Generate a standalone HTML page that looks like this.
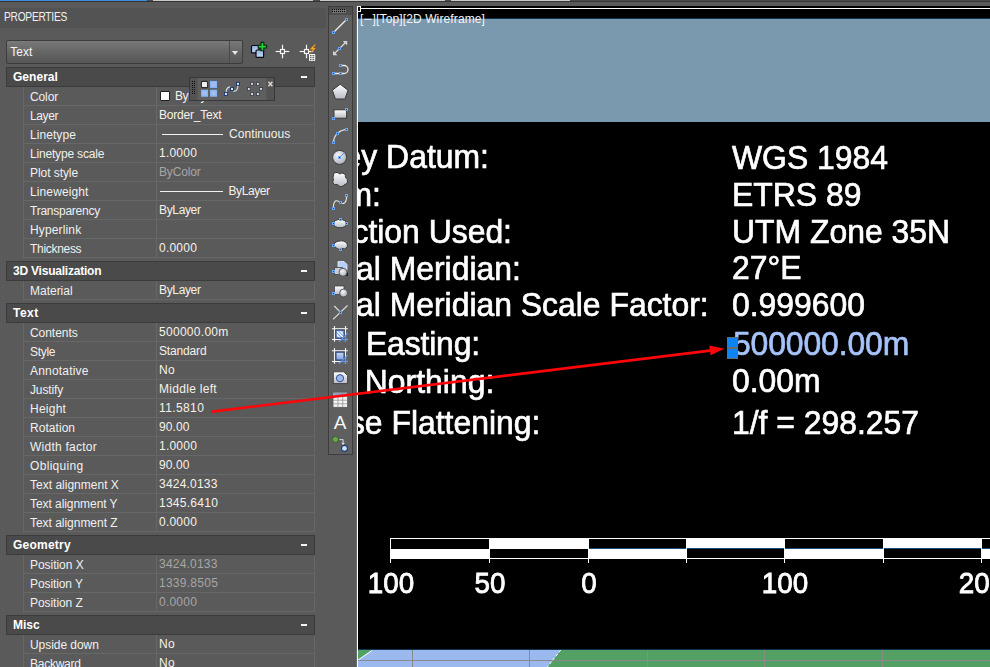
<!DOCTYPE html><html><head><meta charset="utf-8"><title>Properties</title><style>
*{box-sizing:border-box;margin:0;padding:0}
html,body{width:990px;height:667px;overflow:hidden;background:#555555}
body{position:relative;font-family:"Liberation Sans",sans-serif;font-size:12px;color:#f2f2f2}
.a{position:absolute}
.panel{position:absolute;left:0;top:2px;width:328px;height:665px;background:#5a5a5a}
.title{position:absolute;left:0;top:8px;width:326px;height:20px;background:#535353;border-radius:0 4px 4px 0}
.title span{position:absolute;left:4px;top:2px;font-size:12px;color:#f0f0f0;letter-spacing:-0.3px;transform-origin:0 0;transform:scaleX(0.85);white-space:nowrap}
.hdr{position:absolute;left:6px;width:309px;height:20px;background:#4a4a4a;border:1px solid #3b3b3b;font-weight:bold;color:#ffffff}
.hdr b{position:absolute;left:6px;top:2px;font-size:12px}
.hdr i{position:absolute;right:7px;top:8px;width:6.5px;height:2px;background:#f4f4f4}
.row{position:absolute;left:23px;width:292px;height:20px;border:1px solid #676767}
.row .l{position:absolute;left:6px;top:3px;white-space:nowrap;color:#f0f0f0}
.row .v{position:absolute;left:132px;top:0;bottom:0;width:1px;background:#686868}
.row .r{position:absolute;left:135px;top:2px;white-space:nowrap;color:#f6f1e8}
.row .g{color:#a6a6a6}
.dt{position:absolute;white-space:nowrap;color:#fff;font-size:31.9px;line-height:36px;height:36px;-webkit-text-stroke:0.65px currentColor;transform-origin:0 28.4px;transform:scaleY(1.04);will-change:transform}
.sl{position:absolute;white-space:nowrap;color:#fff;font-size:27.8px;line-height:34px;height:34px;text-align:center;width:100px;-webkit-text-stroke:0.8px #fff;transform-origin:50px 27px;transform:scaleY(1.08);will-change:transform}
</style></head><body>
<div class="a" style="left:0;top:0;width:990px;height:1px;background:#4b4b4b"></div>
<div class="a" style="left:0px;top:0;width:147px;height:1px;background:#3a8edb"></div>
<div class="a" style="left:153px;top:0;width:160px;height:1px;background:#c9c9c9"></div>
<div class="a" style="left:320px;top:0;width:125px;height:1px;background:#c9c9c9"></div>
<div class="a" style="left:451px;top:0;width:119px;height:1px;background:#c9c9c9"></div>
<div class="a" style="left:0;top:1px;width:990px;height:1px;background:#333333"></div>
<div class="a" style="left:0;top:2px;width:990px;height:5px;background:#5a5a5a"></div>
<div class="panel"></div>
<div class="title"><span>PROPERTIES</span></div>
<div class="a" style="left:6px;top:40px;width:237px;height:24px;border:1px solid #3c3c3c;border-radius:2px;background:linear-gradient(#7a7a7a,#656565 50%,#575757)"><span class="a" style="left:3.3px;top:4px;color:#f4f4f4">Text</span><span class="a" style="left:221.500px;top:0;width:1px;height:22px;background:#4a4a4a"></span><span class="a" style="left:225px;top:10px;width:0;height:0;border-left:3.500px solid transparent;border-right:3.500px solid transparent;border-top:4px solid #e8e8e8"></span></div>
<div class="row" style="top:86px"><span class="l" style="letter-spacing:-0.12px">Color</span><span class="v"></span><span class="a" style="left:136px;top:4px;width:10px;height:10px;background:#fff;border:1px solid #222;border-radius:1px"></span><span class="r" style="left:151px;letter-spacing:-0.45px">ByLayer</span></div>
<div class="row" style="top:105px"><span class="l" style="letter-spacing:-0.39px">Layer</span><span class="v"></span><span class="r" style="letter-spacing:-0.22px">Border_Text</span></div>
<div class="row" style="top:124px"><span class="l" style="letter-spacing:0.07px">Linetype</span><span class="v"></span><span class="a" style="left:138px;top:9px;width:61px;height:1px;background:#f2f2f2"></span><span class="r" style="left:205px;letter-spacing:0.07px">Continuous</span></div>
<div class="row" style="top:143px"><span class="l" style="letter-spacing:-0.18px">Linetype scale</span><span class="v"></span><span class="r" style="letter-spacing:0.22px">1.0000</span></div>
<div class="row" style="top:162px"><span class="l" style="letter-spacing:-0.06px">Plot style</span><span class="v"></span><span class="r g" style="letter-spacing:-0.16px">ByColor</span></div>
<div class="row" style="top:181px"><span class="l" style="letter-spacing:0.12px">Lineweight</span><span class="v"></span><span class="a" style="left:135.5px;top:9px;width:63.5px;height:1px;background:#f2f2f2"></span><span class="r" style="left:204.5px;letter-spacing:-0.42px">ByLayer</span></div>
<div class="row" style="top:200px"><span class="l" style="letter-spacing:-0.25px">Transparency</span><span class="v"></span><span class="r" style="letter-spacing:-0.35px">ByLayer</span></div>
<div class="row" style="top:219px"><span class="l" style="letter-spacing:0.14px">Hyperlink</span><span class="v"></span><span class="r" style=""></span></div>
<div class="row" style="top:238px"><span class="l" style="letter-spacing:-0.30px">Thickness</span><span class="v"></span><span class="r" style="letter-spacing:0.22px">0.0000</span></div>
<div class="hdr" style="top:67px"><b style="letter-spacing:0.03px">General</b><i></i></div>
<div class="row" style="top:280px"><span class="l" style="letter-spacing:-0.01px">Material</span><span class="v"></span><span class="r" style="letter-spacing:-0.35px">ByLayer</span></div>
<div class="hdr" style="top:261px"><b style="letter-spacing:-0.22px">3D Visualization</b><i></i></div>
<div class="row" style="top:322px"><span class="l" style="letter-spacing:-0.05px">Contents</span><span class="v"></span><span class="r" style="letter-spacing:0.29px">500000.00m</span></div>
<div class="row" style="top:341px"><span class="l" style="letter-spacing:-0.32px">Style</span><span class="v"></span><span class="r" style="letter-spacing:-0.16px">Standard</span></div>
<div class="row" style="top:360px"><span class="l" style="letter-spacing:0.19px">Annotative</span><span class="v"></span><span class="r" style="letter-spacing:0.38px">No</span></div>
<div class="row" style="top:379px"><span class="l" style="letter-spacing:-0.13px">Justify</span><span class="v"></span><span class="r" style="letter-spacing:0.30px">Middle left</span></div>
<div class="row" style="top:398px"><span class="l" style="letter-spacing:0.24px">Height</span><span class="v"></span><span class="r" style="letter-spacing:0.39px">11.5810</span></div>
<div class="row" style="top:417px"><span class="l" style="letter-spacing:0.05px">Rotation</span><span class="v"></span><span class="r" style="letter-spacing:0.11px">90.00</span></div>
<div class="row" style="top:436px"><span class="l" style="letter-spacing:0.25px">Width factor</span><span class="v"></span><span class="r" style="letter-spacing:0.22px">1.0000</span></div>
<div class="row" style="top:455px"><span class="l" style="letter-spacing:0.32px">Obliquing</span><span class="v"></span><span class="r" style="letter-spacing:0.11px">90.00</span></div>
<div class="row" style="top:474px"><span class="l" style="letter-spacing:0.01px">Text alignment X</span><span class="v"></span><span class="r" style="letter-spacing:0.21px">3424.0133</span></div>
<div class="row" style="top:493px"><span class="l" style="letter-spacing:-0.06px">Text alignment Y</span><span class="v"></span><span class="r" style="letter-spacing:0.26px">1345.6410</span></div>
<div class="row" style="top:512px"><span class="l" style="letter-spacing:-0.03px">Text alignment Z</span><span class="v"></span><span class="r" style="letter-spacing:0.22px">0.0000</span></div>
<div class="hdr" style="top:303px"><b style="letter-spacing:0.45px">Text</b><i></i></div>
<div class="row" style="top:554px"><span class="l" style="letter-spacing:-0.04px">Position X</span><span class="v"></span><span class="r g" style="letter-spacing:0.21px">3424.0133</span></div>
<div class="row" style="top:573px"><span class="l" style="letter-spacing:-0.10px">Position Y</span><span class="v"></span><span class="r g" style="letter-spacing:0.26px">1339.8505</span></div>
<div class="row" style="top:592px"><span class="l" style="letter-spacing:-0.06px">Position Z</span><span class="v"></span><span class="r g" style="letter-spacing:0.22px">0.0000</span></div>
<div class="hdr" style="top:535px"><b style="letter-spacing:0.22px">Geometry</b><i></i></div>
<div class="row" style="top:634px"><span class="l" style="letter-spacing:-0.05px">Upside down</span><span class="v"></span><span class="r" style="letter-spacing:0.38px">No</span></div>
<div class="row" style="top:653px"><span class="l" style="letter-spacing:-0.26px">Backward</span><span class="v"></span><span class="r" style="letter-spacing:0.38px">No</span></div>
<div class="hdr" style="top:615px"><b style="letter-spacing:-0.02px">Misc</b><i></i></div>
<svg class="a" style="left:245px;top:38px" width="80" height="28" viewBox="245 38 80 28"><defs><linearGradient id="gq" x1="0" y1="0" x2="0" y2="1"><stop offset="0" stop-color="#8fb2e6"/><stop offset="1" stop-color="#c4d8f4"/></linearGradient></defs><rect x="251.5" y="45.5" width="7.4" height="7.4" rx="1" fill="url(#gq)" stroke="#0a0a0a" stroke-width="1.2"/><rect x="256" y="50" width="7.6" height="7.4" rx="1" fill="url(#gq)" stroke="#0a0a0a" stroke-width="1.2"/><path d="M261 42.4 h2.8 v2.8 h2.8 v2.8 h-2.8 v2.8 h-2.8 v-2.800 h-2.800 v-2.800 h2.800 z" fill="#22d53a" stroke="#0a2a0a" stroke-width="1.1"/><g stroke="#f4f4f4" stroke-width="1.2" fill="none"><line x1="275.7" y1="51.5" x2="280.5" y2="51.5"/><line x1="284.5" y1="51.5" x2="289.3" y2="51.5"/><line x1="282.5" y1="44.7" x2="282.5" y2="49.5"/><line x1="282.5" y1="53.5" x2="282.5" y2="58.3"/><rect x="280.5" y="49.5" width="4" height="4"/></g><g stroke="#f4f4f4" stroke-width="1.2" fill="none"><line x1="299.7" y1="51.5" x2="304.5" y2="51.5"/><line x1="308.5" y1="51.5" x2="313.3" y2="51.5"/><line x1="306.5" y1="44.7" x2="306.5" y2="49.5"/><line x1="306.5" y1="53.5" x2="306.5" y2="58.3"/><rect x="304.5" y="49.5" width="4" height="4"/></g><path d="M314.5 44.5 l-4.500 4.800 h2.600 l-2.200 4.200 l5.400 -5.600 h-2.700 l2.600 -3.400 z" fill="#ffb52e" stroke="#c8680a" stroke-width="0.5"/><rect x="309" y="54" width="6.2" height="7" rx="0.8" fill="#fafafa"/><rect x="310" y="55.2" width="1.6" height="1" fill="#444"/><rect x="312.400" y="55.2" width="1.8" height="1" fill="#444"/><rect x="310" y="57.2" width="1.6" height="1" fill="#444"/><rect x="312.400" y="57.2" width="1.8" height="1" fill="#444"/><rect x="310" y="59.2" width="1.6" height="1" fill="#444"/><rect x="312.400" y="59.2" width="1.8" height="1" fill="#444"/></svg>
<div class="a" style="left:189px;top:77px;width:86px;height:24px;background:#5f5f5f;border:1px solid #383838"><svg class="a" style="left:0;top:0" width="84" height="22" viewBox="190 78 84 22"><rect x="190" y="78" width="7.5" height="22" fill="#535353"/><rect x="266.300" y="78" width="7.7" height="22" fill="#535353"/><rect x="192" y="81" width="1" height="1" fill="#0c0c0c"/><rect x="194" y="81" width="1" height="1" fill="#0c0c0c"/><rect x="192" y="83" width="1" height="1" fill="#0c0c0c"/><rect x="194" y="83" width="1" height="1" fill="#0c0c0c"/><rect x="192" y="85" width="1" height="1" fill="#0c0c0c"/><rect x="194" y="85" width="1" height="1" fill="#0c0c0c"/><rect x="192" y="87" width="1" height="1" fill="#0c0c0c"/><rect x="194" y="87" width="1" height="1" fill="#0c0c0c"/><rect x="192" y="89" width="1" height="1" fill="#0c0c0c"/><rect x="194" y="89" width="1" height="1" fill="#0c0c0c"/><rect x="192" y="91" width="1" height="1" fill="#0c0c0c"/><rect x="194" y="91" width="1" height="1" fill="#0c0c0c"/><rect x="192" y="93" width="1" height="1" fill="#0c0c0c"/><rect x="194" y="93" width="1" height="1" fill="#0c0c0c"/><rect x="201.400" y="81.400" width="6.200" height="6.200" rx="1" fill="#f0f0f2" stroke="#2b2b2b" stroke-width="1.100"/><rect x="210.8" y="81.7" width="5.5" height="5.5" fill="#a6bfe8" stroke="#8ab6ff" stroke-width="1.500"/><rect x="201.8" y="90.5" width="5.5" height="5.5" fill="#a6bfe8" stroke="#8ab6ff" stroke-width="1.500"/><rect x="210.8" y="90.5" width="5.5" height="5.5" fill="#a6bfe8" stroke="#8ab6ff" stroke-width="1.500"/><path d="M226 94 C226 85.5 231 86.500 232 89 S238 93.500 238 84" fill="none" stroke="#d8d8d8" stroke-width="1.2"/><rect x="236.5" y="82.3" width="3.0" height="3.0" fill="#d6e6ff" stroke="#14306e" stroke-width="0.9"/><rect x="230.5" y="87.4" width="3.0" height="3.0" fill="#d6e6ff" stroke="#14306e" stroke-width="0.9"/><rect x="224.4" y="92.4" width="3.0" height="3.0" fill="#d6e6ff" stroke="#14306e" stroke-width="0.9"/><rect x="250.6" y="82.4" width="2.8" height="2.8" fill="#d6e6ff" stroke="#3d3d3d" stroke-width="0.9"/><rect x="256.5" y="82.4" width="2.8" height="2.8" fill="#d6e6ff" stroke="#3d3d3d" stroke-width="0.9"/><rect x="247.4" y="87.5" width="2.8" height="2.8" fill="#d6e6ff" stroke="#3d3d3d" stroke-width="0.9"/><rect x="259.6" y="87.5" width="2.8" height="2.8" fill="#d6e6ff" stroke="#3d3d3d" stroke-width="0.9"/><rect x="250.6" y="92.6" width="2.8" height="2.8" fill="#d6e6ff" stroke="#3d3d3d" stroke-width="0.9"/><rect x="256.5" y="92.6" width="2.8" height="2.8" fill="#d6e6ff" stroke="#3d3d3d" stroke-width="0.9"/><path d="M268.400 81.800 l4 4.400 M272.400 81.800 l-4 4.400" stroke="#d6d6d6" stroke-width="1.500" fill="none"/></svg></div>
<div class="a" style="left:328px;top:7px;width:29px;height:660px;background:#5a5a5a"></div><div class="a" style="left:356px;top:7px;width:1px;height:660px;background:#6c6c6c"></div>
<div class="a" id="tb" style="left:328px;top:6px;width:25px;height:449px;background:#5f5f5f;border:1px solid #3c3c3c"></div>
<div class="a" style="left:329px;top:7px;width:23px;height:8px;background:#4e4e4e"></div>
<svg class="a" style="left:328px;top:6px" width="26" height="449" viewBox="328 6 26 449"><defs><linearGradient id="gw" x1="0" y1="0" x2="0" y2="1"><stop offset="0" stop-color="#ffffff"/><stop offset="1" stop-color="#b9bcc6"/></linearGradient><linearGradient id="gb" x1="0" y1="0" x2="1" y2="1"><stop offset="0" stop-color="#dfe9fb"/><stop offset="1" stop-color="#7f9fdc"/></linearGradient><radialGradient id="gs" cx="0.4" cy="0.35" r="0.7"><stop offset="0" stop-color="#f4f5f8"/><stop offset="1" stop-color="#a9adb8"/></radialGradient></defs><rect x="332.6" y="9.6" width="1" height="1" fill="#c4c4c4"/><rect x="332" y="9" width="1" height="1" fill="#0c0c0c"/><rect x="332.6" y="11.6" width="1" height="1" fill="#c4c4c4"/><rect x="332" y="11" width="1" height="1" fill="#0c0c0c"/><rect x="334.6" y="9.6" width="1" height="1" fill="#c4c4c4"/><rect x="334" y="9" width="1" height="1" fill="#0c0c0c"/><rect x="334.6" y="11.6" width="1" height="1" fill="#c4c4c4"/><rect x="334" y="11" width="1" height="1" fill="#0c0c0c"/><rect x="336.6" y="9.6" width="1" height="1" fill="#c4c4c4"/><rect x="336" y="9" width="1" height="1" fill="#0c0c0c"/><rect x="336.6" y="11.6" width="1" height="1" fill="#c4c4c4"/><rect x="336" y="11" width="1" height="1" fill="#0c0c0c"/><rect x="338.6" y="9.6" width="1" height="1" fill="#c4c4c4"/><rect x="338" y="9" width="1" height="1" fill="#0c0c0c"/><rect x="338.6" y="11.6" width="1" height="1" fill="#c4c4c4"/><rect x="338" y="11" width="1" height="1" fill="#0c0c0c"/><rect x="340.6" y="9.6" width="1" height="1" fill="#c4c4c4"/><rect x="340" y="9" width="1" height="1" fill="#0c0c0c"/><rect x="340.6" y="11.6" width="1" height="1" fill="#c4c4c4"/><rect x="340" y="11" width="1" height="1" fill="#0c0c0c"/><rect x="342.6" y="9.6" width="1" height="1" fill="#c4c4c4"/><rect x="342" y="9" width="1" height="1" fill="#0c0c0c"/><rect x="342.6" y="11.6" width="1" height="1" fill="#c4c4c4"/><rect x="342" y="11" width="1" height="1" fill="#0c0c0c"/><rect x="344.6" y="9.6" width="1" height="1" fill="#c4c4c4"/><rect x="344" y="9" width="1" height="1" fill="#0c0c0c"/><rect x="344.6" y="11.6" width="1" height="1" fill="#c4c4c4"/><rect x="344" y="11" width="1" height="1" fill="#0c0c0c"/><line x1="333.5" y1="32.5" x2="346.5" y2="19.5" stroke="#f0f0f0" stroke-width="1.2"/><rect x="345" y="18" width="3" height="3" fill="#68a6fb" shape-rendering="crispEdges"/><rect x="346" y="19" width="1" height="1" fill="#33465f" shape-rendering="crispEdges"/><rect x="332" y="31" width="3" height="3" fill="#68a6fb" shape-rendering="crispEdges"/><rect x="333" y="32" width="1" height="1" fill="#33465f" shape-rendering="crispEdges"/><line x1="335" y1="53" x2="345.5" y2="42.5" stroke="#dcdcdc" stroke-width="1.1"/><polygon points="342.8,41 347.2,41 347.2,45.400" fill="#d6d6d6"/><polygon points="333,50.800 333,55.200 337.400,55.200" fill="#d6d6d6"/><rect x="338" y="47" width="3" height="3" fill="#68a6fb" shape-rendering="crispEdges"/><rect x="339" y="48" width="1" height="1" fill="#33465f" shape-rendering="crispEdges"/><path d="M333.5 73.5 H344 A4 4 0 0 0 344 65.5 H340.5" fill="none" stroke="#e9e9e9" stroke-width="1.3"/><rect x="339" y="64" width="3" height="3" fill="#68a6fb" shape-rendering="crispEdges"/><rect x="340" y="65" width="1" height="1" fill="#33465f" shape-rendering="crispEdges"/><rect x="332" y="72" width="3" height="3" fill="#68a6fb" shape-rendering="crispEdges"/><rect x="333" y="73" width="1" height="1" fill="#33465f" shape-rendering="crispEdges"/><rect x="339" y="72" width="3" height="3" fill="#68a6fb" shape-rendering="crispEdges"/><rect x="340" y="73" width="1" height="1" fill="#33465f" shape-rendering="crispEdges"/><polygon points="340.2,84.2 348,90.2 345,99 335.4,99 332.4,90.2" fill="url(#gw)" stroke="#3a3a3a" stroke-width="1"/><rect x="334" y="109.8" width="12.6" height="8.4" fill="url(#gw)" stroke="#3a3a3a" stroke-width="1"/><rect x="345" y="108" width="3" height="3" fill="#68a6fb" shape-rendering="crispEdges"/><rect x="346" y="109" width="1" height="1" fill="#33465f" shape-rendering="crispEdges"/><rect x="332" y="117" width="3" height="3" fill="#68a6fb" shape-rendering="crispEdges"/><rect x="333" y="118" width="1" height="1" fill="#33465f" shape-rendering="crispEdges"/><path d="M333.3 142.6 Q334.5 131 346.6 129.2" fill="none" stroke="#e6e6e6" stroke-width="1.15"/><rect x="345" y="128" width="3" height="3" fill="#68a6fb" shape-rendering="crispEdges"/><rect x="346" y="129" width="1" height="1" fill="#33465f" shape-rendering="crispEdges"/><rect x="336" y="132" width="3" height="3" fill="#68a6fb" shape-rendering="crispEdges"/><rect x="337" y="133" width="1" height="1" fill="#33465f" shape-rendering="crispEdges"/><rect x="332" y="141" width="3" height="3" fill="#68a6fb" shape-rendering="crispEdges"/><rect x="333" y="142" width="1" height="1" fill="#33465f" shape-rendering="crispEdges"/><circle cx="339.6" cy="157.4" r="7" fill="url(#gs)" stroke="#3a3a3a" stroke-width="1"/><line x1="339.6" y1="157.4" x2="344.5" y2="152.5" stroke="#5b94ee" stroke-width="1"/><rect x="338" y="156" width="3" height="3" fill="#68a6fb" shape-rendering="crispEdges"/><rect x="339" y="157" width="1" height="1" fill="#33465f" shape-rendering="crispEdges"/><path d="M333.5 175 Q333 172.5 336 172.500 Q338.5 172 339.5 174 Q341.5 172.5 344 173.5 Q346 175 345.5 177.5 Q348 179 347.5 182 Q347 184.5 344.5 184.5 Q343.5 187 340.5 186.5 Q338 186 337.5 184.5 Q334 185.5 333 183 Q332.5 181 333.5 180 Q332.500 177.500 333.500 175 Z" fill="url(#gw)" stroke="#3a3a3a" stroke-width="1"/><path d="M333.3 208.5 C333.5 198 338 200.5 340.5 202.5 S346.5 204 346.7 195.5" fill="none" stroke="#e6e6e6" stroke-width="1.15"/><rect x="345" y="194" width="3" height="3" fill="#68a6fb" shape-rendering="crispEdges"/><rect x="346" y="195" width="1" height="1" fill="#33465f" shape-rendering="crispEdges"/><rect x="339" y="201" width="3" height="3" fill="#68a6fb" shape-rendering="crispEdges"/><rect x="340" y="202" width="1" height="1" fill="#33465f" shape-rendering="crispEdges"/><rect x="332" y="207" width="3" height="3" fill="#68a6fb" shape-rendering="crispEdges"/><rect x="333" y="208" width="1" height="1" fill="#33465f" shape-rendering="crispEdges"/><ellipse cx="340" cy="223.6" rx="6.6" ry="4.2" fill="url(#gw)" stroke="#3a3a3a" stroke-width="1"/><rect x="332" y="222" width="3" height="3" fill="#68a6fb" shape-rendering="crispEdges"/><rect x="333" y="223" width="1" height="1" fill="#33465f" shape-rendering="crispEdges"/><rect x="339" y="218" width="3" height="3" fill="#68a6fb" shape-rendering="crispEdges"/><rect x="340" y="219" width="1" height="1" fill="#33465f" shape-rendering="crispEdges"/><rect x="345" y="222" width="3" height="3" fill="#68a6fb" shape-rendering="crispEdges"/><rect x="346" y="223" width="1" height="1" fill="#33465f" shape-rendering="crispEdges"/><path d="M334 246 A6.8 4.4 0 1 1 344.5 249 Q341 247.5 338 249.3 Z" fill="url(#gw)" stroke="#3a3a3a" stroke-width="1"/><rect x="332" y="244" width="3" height="3" fill="#68a6fb" shape-rendering="crispEdges"/><rect x="333" y="245" width="1" height="1" fill="#33465f" shape-rendering="crispEdges"/><rect x="339" y="248" width="3" height="3" fill="#68a6fb" shape-rendering="crispEdges"/><rect x="340" y="249" width="1" height="1" fill="#33465f" shape-rendering="crispEdges"/><rect x="343" y="270" width="5" height="6" fill="#1e1e1e"/><path d="M338 261.5 h6 l3 3 v8 h-9 z" fill="#b7d0f7" stroke="#e8f0ff" stroke-width="0.8"/><rect x="334.5" y="267.5" width="8" height="7" fill="#c9ccd4" stroke="#444" stroke-width="0.8"/><circle cx="343" cy="272.3" r="4" fill="url(#gs)" stroke="#444" stroke-width="0.8"/><rect x="332" y="270" width="3" height="3" fill="#68a6fb" shape-rendering="crispEdges"/><rect x="333" y="271" width="1" height="1" fill="#33465f" shape-rendering="crispEdges"/><rect x="334.5" y="286" width="9.5" height="8.5" fill="url(#gw)" stroke="#444" stroke-width="0.8"/><circle cx="343.6" cy="293" r="4" fill="url(#gs)" stroke="#444" stroke-width="0.8"/><rect x="332" y="292" width="3" height="3" fill="#68a6fb" shape-rendering="crispEdges"/><rect x="333" y="293" width="1" height="1" fill="#33465f" shape-rendering="crispEdges"/><line x1="333" y1="319.3" x2="347.5" y2="305.5" stroke="#e0e0e0" stroke-width="1.1"/><line x1="334.3" y1="306" x2="340.5" y2="312.4" stroke="#e0e0e0" stroke-width="1.1"/><rect x="339" y="311" width="3" height="3" fill="#68a6fb" shape-rendering="crispEdges"/><rect x="340" y="312" width="1" height="1" fill="#33465f" shape-rendering="crispEdges"/><defs><pattern id="ht" width="2.4" height="2.4" patternUnits="userSpaceOnUse" patternTransform="rotate(-45)"><rect width="2.4" height="2.4" fill="#f4f6fb"/><rect width="0.9" height="2.4" fill="#6a9af0"/></pattern><linearGradient id="gg" x1="0" y1="0" x2="0" y2="1"><stop offset="0" stop-color="#cdd9f2"/><stop offset="1" stop-color="#819fdb"/></linearGradient></defs><g stroke="#f2f2f2" stroke-width="1.1"><line x1="334.5" y1="326" x2="334.5" y2="341.8"/><line x1="345.5" y1="326" x2="345.5" y2="341.8"/><line x1="332" y1="328.7" x2="347.8" y2="328.7"/><line x1="332" y1="339.5" x2="347.8" y2="339.5"/></g><rect x="336" y="330.2" width="8" height="7.800" fill="url(#ht)" stroke="#24407c" stroke-width="1"/><g stroke="#5b97f5" stroke-width="1.1"><line x1="338.900" y1="341.8" x2="347.8" y2="333.2"/><line x1="345.5" y1="336" x2="345.5" y2="341.8"/><line x1="341.500" y1="339.5" x2="347.8" y2="339.5"/></g><g stroke="#f2f2f2" stroke-width="1.1"><line x1="334.5" y1="348" x2="334.5" y2="363.8"/><line x1="345.5" y1="348" x2="345.5" y2="363.8"/><line x1="332" y1="350.7" x2="347.8" y2="350.7"/><line x1="332" y1="361.5" x2="347.8" y2="361.5"/></g><rect x="336" y="352.2" width="8" height="7.800" fill="url(#gg)" stroke="#24407c" stroke-width="1"/><g stroke="#5b97f5" stroke-width="1.1"><line x1="338.900" y1="363.8" x2="347.8" y2="355.2"/><line x1="345.5" y1="358" x2="345.5" y2="363.8"/><line x1="341.500" y1="361.5" x2="347.8" y2="361.5"/></g><path d="M333.3 371.8 h10.5 l3.8 3.8 v8 h-14.3 z" fill="url(#gw)" stroke="#3a3a3a" stroke-width="0.9"/><circle cx="340" cy="378.2" r="3.6" fill="#9db9ee" stroke="#2f4f8f" stroke-width="1"/><rect x="333" y="392.3" width="14.6" height="15" fill="#f4f4f4" stroke="#555" stroke-width="0.8"/><rect x="333.4" y="392.7" width="13.8" height="3.8" fill="#8e9fb8"/><line x1="333" y1="396.6" x2="347.6" y2="396.6" stroke="#8a8a8a" stroke-width="0.7"/><line x1="333" y1="400.2" x2="347.6" y2="400.2" stroke="#8a8a8a" stroke-width="0.7"/><line x1="333" y1="403.8" x2="347.6" y2="403.8" stroke="#8a8a8a" stroke-width="0.7"/><line x1="337.9" y1="396.6" x2="337.9" y2="407.3" stroke="#8a8a8a" stroke-width="0.7"/><line x1="342.7" y1="396.6" x2="342.7" y2="407.3" stroke="#8a8a8a" stroke-width="0.7"/><text x="340.2" y="429" text-anchor="middle" font-family="Liberation Sans, sans-serif" font-size="19" fill="#f6f6f6">A</text><path d="M339.5 439.6 h3.6 v4" fill="none" stroke="#d8d8d8" stroke-width="1"/><polygon points="341.3,442.8 344.9,442.8 343.1,445.2" fill="#d8d8d8"/><circle cx="335.4" cy="439.4" r="3" fill="#6aa84f" stroke="#2e5a1c" stroke-width="0.8"/><circle cx="344.5" cy="448.4" r="3" fill="#cde0f8" stroke="#1c3a78" stroke-width="1.1"/></svg>
<div class="a" style="left:357px;top:6px;width:633px;height:2px;background:#000;border-left:1px solid #fff"></div>
<div class="a" id="dw" style="left:357px;top:8px;width:633px;height:659px;background:#000;overflow:hidden;border-left:1px solid #fff;border-top:1px solid #fff">
<div class="a" style="left:0;top:9px;width:632px;height:1px;background:#0e3550"></div>
<div class="a" style="left:0;top:10px;width:632px;height:103px;background:#7a99ae"></div>
<div class="a" style="left:2px;top:3px;font-size:12px;color:#f4f4f4;white-space:nowrap;letter-spacing:0.12px">[<span style="display:inline-block;margin:0 1px;transform:scaleX(1.35)">−</span>][Top][2D Wireframe]</div>
<div class="dt" style="right:501.1px;top:130.1px;color:#fff">Survey Datum:</div>
<div class="dt" style="right:609.2px;top:167.6px;color:#fff">Local Datum:</div>
<div class="dt" style="right:478.1px;top:205.1px;color:#fff">Projection Used:</div>
<div class="dt" style="right:469.5px;top:241.9px;color:#fff">Central Meridian:</div>
<div class="dt" style="right:281.2px;top:277.7px;color:#fff">Central Meridian Scale Factor:</div>
<div class="dt" style="right:510.2px;top:316.5px;color:#fff"><span style="letter-spacing:-0.15px">False Easting:</span></div>
<div class="dt" style="right:496.0px;top:355.0px;color:#fff">False Northing:</div>
<div class="dt" style="right:449.3px;top:396.4px;color:#fff">Inverse Flattening:</div>
<div class="dt" style="left:374.2px;top:130.8px;color:#fff">WGS 1984</div>
<div class="dt" style="left:374.2px;top:167.6px;color:#fff">ETRS 89</div>
<div class="dt" style="left:374.2px;top:204.9px;color:#fff">UTM Zone 35N</div>
<div class="dt" style="left:374.2px;top:240.9px;color:#fff">27°E</div>
<div class="dt" style="left:374.2px;top:277.9px;color:#fff">0.999600</div>
<div class="dt" style="left:375.0px;top:316.5px;color:#a6c3fa"><span style="letter-spacing:-0.12px">500000.00m</span></div>
<div class="dt" style="left:374.2px;top:354.1px;color:#fff">0.00m</div>
<div class="dt" style="left:374.2px;top:395.6px;color:#fff">1/f = 298.257</div>
<svg class="a" style="left:0;top:0" width="632" height="658" viewBox="358 9 632 658" shape-rendering="crispEdges">
<rect x="390" y="549" width="99" height="10" fill="#fff"/>
<rect x="489" y="538" width="99" height="11" fill="#fff"/>
<rect x="588" y="549" width="98" height="10" fill="#fff"/>
<rect x="686" y="538" width="98.5" height="11" fill="#fff"/>
<rect x="784.5" y="549" width="98.5" height="10" fill="#fff"/>
<rect x="883" y="538" width="98.5" height="11" fill="#fff"/>
<rect x="981.5" y="549" width="98.5" height="10" fill="#fff"/>
<rect x="588" y="548" width="402" height="1" fill="#1d4c7c"/>
<rect x="390.5" y="538.5" width="700" height="20" fill="none" stroke="#fff" stroke-width="1"/>
<rect x="390" y="538" width="1" height="25" fill="#fff"/>
<rect x="489" y="538" width="1" height="25" fill="#fff"/>
<rect x="588" y="538" width="1" height="25" fill="#fff"/>
<rect x="686" y="538" width="1" height="25" fill="#fff"/>
<rect x="784" y="538" width="1" height="25" fill="#fff"/>
<rect x="883" y="538" width="1" height="25" fill="#fff"/>
<rect x="981" y="538" width="1" height="25" fill="#fff"/>
<rect x="1080" y="538" width="1" height="25" fill="#fff"/>
<rect x="358" y="650" width="632" height="17" fill="#53a064"/>
<polygon points="358,650 560.8,650 547.3,667 358,667" fill="#9bb9ef" shape-rendering="auto"/>
<polygon points="358,650 372,650 358,660" fill="#53a064" shape-rendering="auto"/>
<line x1="372" y1="650.5" x2="358" y2="660" stroke="#fff" stroke-width="1" shape-rendering="auto"/>
<rect x="412" y="650" width="1" height="17" fill="#8a8a8a"/>
<rect x="529" y="650" width="1" height="17" fill="#8a8a8a"/>
<rect x="647" y="650" width="1" height="17" fill="#8a8a8a"/>
<rect x="764" y="650" width="1" height="17" fill="#8a8a8a"/>
<rect x="882" y="650" width="1" height="17" fill="#8a8a8a"/>
<rect x="358" y="660" width="632" height="1" fill="#8a8a8a"/>
<rect x="358" y="649" width="632" height="1" fill="#0c3350"/>
<line x1="560.8" y1="650" x2="547.3" y2="667" stroke="#fff" stroke-width="1" stroke-dasharray="3 2" shape-rendering="auto"/>
</svg>
<div class="sl" style="left:-17.4px;top:557.8px">100</div>
<div class="sl" style="left:81.6px;top:557.8px">50</div>
<div class="sl" style="left:180.6px;top:557.8px">0</div>
<div class="sl" style="left:377.1px;top:557.8px">100</div>
<div class="sl" style="left:574.1px;top:557.8px">200</div>
<div class="a" style="left:369px;top:328px;width:11px;height:11px;background:#0b84f5;border:1px solid #6a6a6a"></div>
<div class="a" style="left:369px;top:339px;width:11px;height:11px;background:#0b84f5;border:1px solid #6a6a6a"></div>
</div>
<div class="a" style="left:357px;top:6px;width:4px;height:6px;border:1px solid #fff;background:#111"></div>
<svg class="a" style="left:0;top:0;pointer-events:none" width="990" height="667" viewBox="0 0 990 667"><line x1="212.5" y1="411.6" x2="712" y2="350.3" stroke="#fd0509" stroke-width="2.7" stroke-linecap="round"/><polygon points="724.6,348.7 709.3,345.6 710.5,355.2" fill="#fd0509"/></svg>
</body></html>
